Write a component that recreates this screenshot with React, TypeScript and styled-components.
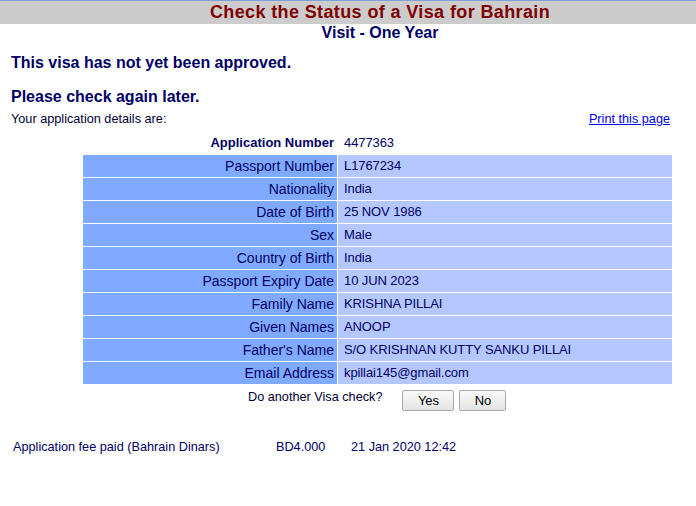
import React from "react";
import styled, { createGlobalStyle } from "styled-components";

const Global = createGlobalStyle`
  html, body { margin: 0; padding: 0; background: #fff; }
  body { font-family: "Liberation Sans", Arial, sans-serif; color: #000066; }
`;

const Page = styled.div`
  width: 696px;
  min-height: 506px;
  overflow: hidden;
`;

const TitleBar = styled.div`
  border-top: 1px solid #7f9fd5;
  background: #cccccc;
  height: 23px;
  padding-left: 64px;
  text-align: center;
`;

const Title = styled.h1`
  margin: 0;
  font-size: 18px;
  line-height: 23px;
  font-weight: bold;
  letter-spacing: 0.38px;
  color: #800000;
`;

const SubTitle = styled.h2`
  margin: 0;
  padding-left: 64px;
  text-align: center;
  font-size: 16px;
  line-height: 18px;
  font-weight: bold;
  color: #000066;
`;

const Notice = styled.p<{ $top: number }>`
  margin: ${(p) => p.$top}px 0 0 11px;
  font-size: 16px;
  line-height: 18px;
  font-weight: bold;
  color: #000066;
`;

const DetailsBar = styled.div`
  display: flex;
  justify-content: space-between;
  margin: 6px 26px 0 11px;
  font-size: 12.7px;
  line-height: 15px;
  color: #000033;
`;

const PrintLink = styled.a`
  color: #0000ee;
  text-decoration: underline;
  cursor: pointer;
`;

const DetailsGrid = styled.div`
  display: grid;
  grid-template-columns: 254px 334px;
  grid-auto-rows: 22px;
  gap: 1px;
  margin: 5px 0 0 83px;
  width: 589px;
`;

const Label = styled.div<{ $head?: boolean }>`
  background: ${(p) => (p.$head ? "#ffffff" : "#80aaff")};
  text-align: right;
  padding-right: 3px;
  font-size: ${(p) => (p.$head ? "13px" : "14px")};
  font-weight: ${(p) => (p.$head ? "bold" : "normal")};
  line-height: 22px;
  color: #000066;
  white-space: nowrap;
`;

const Value = styled.div<{ $head?: boolean }>`
  background: ${(p) => (p.$head ? "#ffffff" : "#b5c7ff")};
  padding-left: 6px;
  font-size: 13px;
  line-height: 22px;
  letter-spacing: -0.1px;
  color: #000066;
  white-space: nowrap;
`;

const AgainRow = styled.div`
  display: flex;
  align-items: flex-start;
  margin: 6px 0 0 248px;
  gap: 20px;
`;

const AgainText = styled.span`
  font-size: 12.7px;
  line-height: 15px;
  color: #000033;
`;

const Buttons = styled.div`
  display: flex;
  gap: 5px;
`;

const Btn = styled.button<{ $w: number }>`
  width: ${(p) => p.$w}px;
  height: 21px;
  padding: 0;
  border: 1px solid #a9a9a9;
  border-radius: 2px;
  background: linear-gradient(#fafafa, #e4e4e4);
  font-family: "Liberation Sans", Arial, sans-serif;
  font-size: 13px;
  line-height: 19px;
  color: #000;
`;

const FeeRow = styled.div`
  display: grid;
  grid-template-columns: 263px 75px auto;
  margin: 29px 0 0 13px;
  font-size: 12.7px;
  line-height: 15px;
  color: #000066;
`;

const rows: [string, string][] = [
  ["Passport Number", "L1767234"],
  ["Nationality", "India"],
  ["Date of Birth", "25 NOV 1986"],
  ["Sex", "Male"],
  ["Country of Birth", "India"],
  ["Passport Expiry Date", "10 JUN 2023"],
  ["Family Name", "KRISHNA PILLAI"],
  ["Given Names", "ANOOP"],
  ["Father's Name", "S/O KRISHNAN KUTTY SANKU PILLAI"],
  ["Email Address", "kpillai145@gmail.com"],
];

export default function App() {
  return (
    <Page>
      <Global />
      <TitleBar>
        <Title>Check the Status of a Visa for Bahrain</Title>
      </TitleBar>
      <SubTitle>Visit - One Year</SubTitle>
      <Notice $top={12}>This visa has not yet been approved.</Notice>
      <Notice $top={16}>Please check again later.</Notice>
      <DetailsBar>
        <span>Your application details are:</span>
        <PrintLink>Print this page</PrintLink>
      </DetailsBar>
      <DetailsGrid>
        <Label $head>Application Number</Label>
        <Value $head>4477363</Value>
        {rows.map(([l, v]) => (
          <React.Fragment key={l}>
            <Label>{l}</Label>
            <Value>{v}</Value>
          </React.Fragment>
        ))}
      </DetailsGrid>
      <AgainRow>
        <AgainText>Do another Visa check?</AgainText>
        <Buttons>
          <Btn $w={52}>Yes</Btn>
          <Btn $w={47}>No</Btn>
        </Buttons>
      </AgainRow>
      <FeeRow>
        <span>Application fee paid (Bahrain Dinars)</span>
        <span>BD4.000</span>
        <span>21 Jan 2020 12:42</span>
      </FeeRow>
    </Page>
  );
}
